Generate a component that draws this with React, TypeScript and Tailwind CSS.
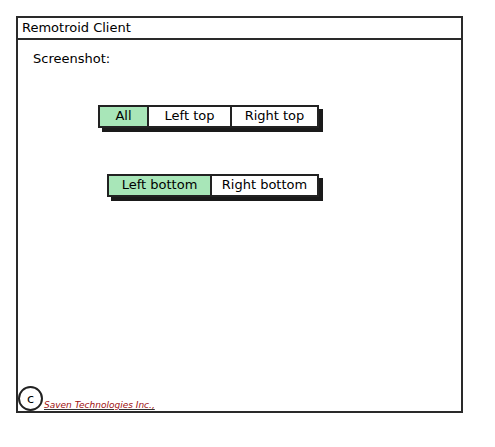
import React from "react";

const Segmented = ({ items, active }: { items: { label: string; w: number }[]; active: number }) => (
    <div className="flex shadow-[4px_4px_0_#1a1a1a]">
        {items.map((item, index) => (
            <div
                key={index}
                style={{ width: item.w }}
                className={`h-[23px] flex items-center justify-center border-2 border-[#222] text-[13px] text-black ${
                    index > 0 ? "-ml-[2px]" : ""
                } ${index === active ? "bg-[#a8e6b8]" : "bg-white"}`}
            >
                {item.label}
            </div>
        ))}
    </div>
);

const App = () => {
    return (
        <div className="w-[495px] h-[447px] bg-white pt-4 pl-4 font-['DejaVu_Sans',sans-serif]">
            <div className="w-[447px] h-[397px] flex flex-col border-2 border-[#2a2a2a]">
                <div className="h-[22px] border-b-2 border-[#2a2a2a] flex items-center pl-[4px] text-[13px] text-black">
                    Remotroid Client
                </div>
                <div className="flex-1 flex flex-col">
                    <div className="pl-[15px] pt-[9px] text-[13px] text-black">Screenshot:</div>
                    <div className="pl-[80px] pt-[36px]">
                        <div className="flex">
                            <Segmented
                                active={0}
                                items={[
                                    { label: "All", w: 51 },
                                    { label: "Left top", w: 85 },
                                    { label: "Right top", w: 89 },
                                ]}
                            />
                        </div>
                    </div>
                    <div className="pl-[89px] pt-[46px]">
                        <div className="flex">
                            <Segmented
                                active={0}
                                items={[
                                    { label: "Left bottom", w: 105 },
                                    { label: "Right bottom", w: 109 },
                                ]}
                            />
                        </div>
                    </div>
                    <div className="mt-auto flex items-end">
                        <div className="w-[25px] h-[25px] rounded-full border-2 border-[#222] flex items-center justify-center text-[13px] text-black">
                            c
                        </div>
                        <span className="ml-[1px] text-[9px] italic text-[#a01010] underline decoration-[#333] leading-none pb-[1px]">
                            Saven Technologies Inc.,
                        </span>
                    </div>
                </div>
            </div>
        </div>
    );
};

export default App;
